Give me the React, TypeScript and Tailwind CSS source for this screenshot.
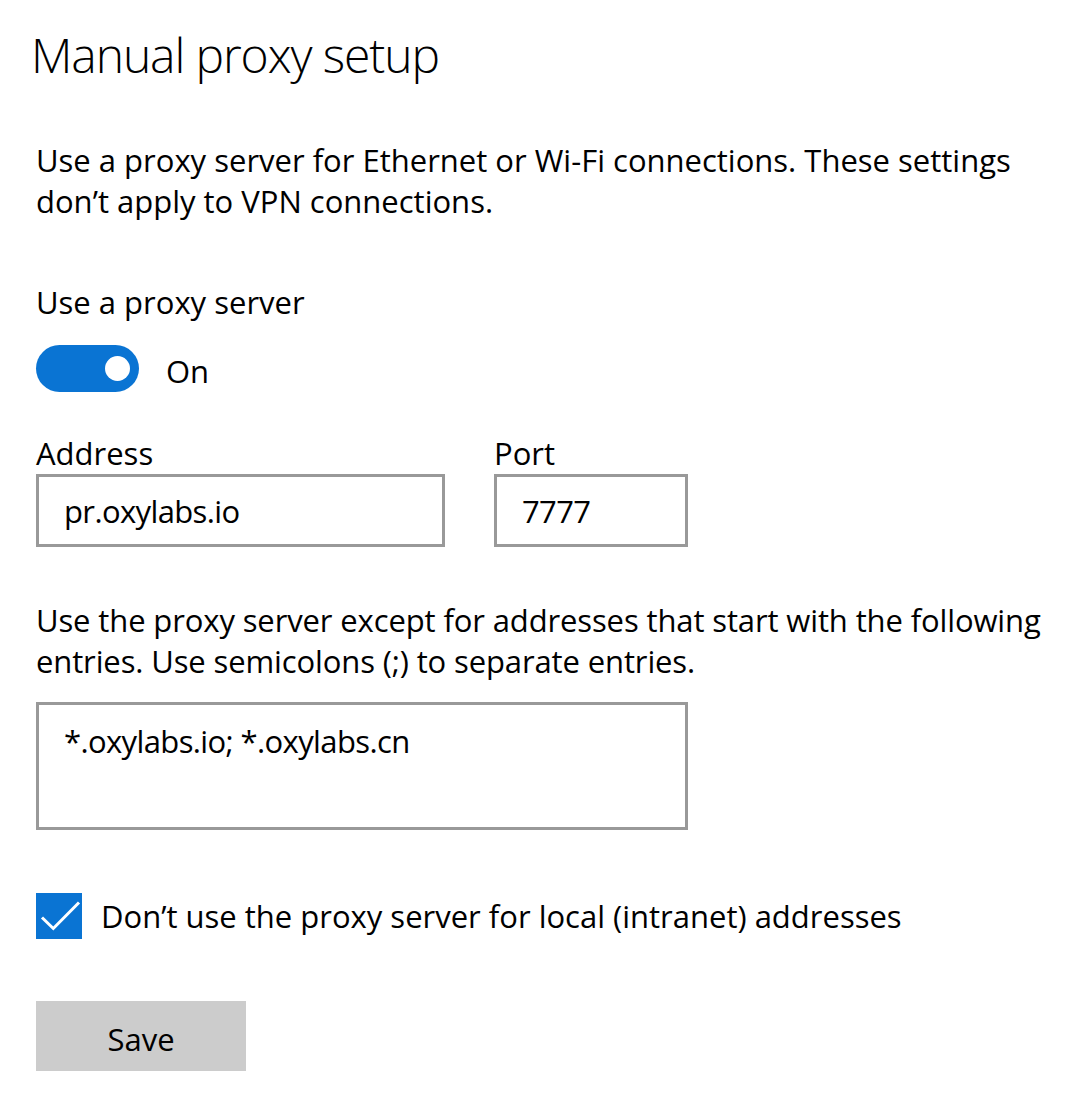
import { useState } from "react";

const font = { fontFamily: '"Open Sans", "Noto Sans", sans-serif' };

function Toggle({ on, onChange }: { on: boolean; onChange: () => void }) {
  return (
    <button
      onClick={onChange}
      className={`flex h-[47px] w-[103px] items-center rounded-full px-[9px] ${
        on ? "justify-end bg-[#0a74d3]" : "justify-start border-[3px] border-black bg-white"
      }`}
    >
      <span className={`h-[25px] w-[25px] rounded-full ${on ? "bg-white" : "bg-black"}`} />
    </button>
  );
}

function Checkbox({ checked, onChange }: { checked: boolean; onChange: () => void }) {
  return (
    <button
      onClick={onChange}
      className={`h-[46px] w-[46px] shrink-0 ${checked ? "bg-[#0a74d3]" : "border-[3px] border-black bg-white"}`}
    >
      {checked && (
        <svg viewBox="0 0 46 46" className="h-full w-full">
          <path d="M6 24.5 L17.3 35.5 L43 9.5" fill="none" stroke="white" strokeWidth="3" />
        </svg>
      )}
    </button>
  );
}

export default function App() {
  const [useProxy, setUseProxy] = useState(true);
  const [bypassLocal, setBypassLocal] = useState(true);
  const [address, setAddress] = useState("pr.oxylabs.io");
  const [port, setPort] = useState("7777");
  const [exceptions, setExceptions] = useState("*.oxylabs.io; *.oxylabs.cn");

  return (
    <div className="min-h-[1113px] w-[1080px] bg-white pl-[36px] pt-[25px] text-black" style={font}>
      <h1 className="-ml-[5px] h-[60px] text-[48px] font-light leading-[60px] tracking-[-0.023em]">
        Manual proxy setup
      </h1>

      <p className="mt-[55px] whitespace-nowrap text-[31px] leading-[41px]">
        Use a proxy server for Ethernet or Wi-Fi connections. These settings
        <br />
        don’t apply to VPN connections.
      </p>

      <div className="mt-[60px] text-[31px] leading-[41px]">Use a proxy server</div>

      <div className="mt-[22px] flex items-start">
        <Toggle on={useProxy} onChange={() => setUseProxy(!useProxy)} />
        <span className="ml-[27px] mt-[6px] text-[31px] leading-[41px]">{useProxy ? "On" : "Off"}</span>
      </div>

      <div className="mt-[41px] flex gap-[49px]">
        <div className="flex w-[409px] flex-col">
          <label className="text-[31px] leading-[41px]">Address</label>
          <input
            value={address}
            onChange={(e) => setAddress(e.target.value)}
            className="h-[73px] w-full border-[3px] border-[#999999] bg-white pl-[25px] text-[31px] tracking-[-0.02em] outline-none"
          />
        </div>
        <div className="flex w-[194px] flex-col">
          <label className="text-[31px] leading-[41px]">Port</label>
          <input
            value={port}
            onChange={(e) => setPort(e.target.value)}
            className="h-[73px] w-full border-[3px] border-[#999999] bg-white pl-[25px] text-[31px] tracking-[-0.02em] outline-none"
          />
        </div>
      </div>

      <p className="mt-[53px] whitespace-nowrap text-[31px] leading-[41px] tracking-[-0.004em]">
        Use the proxy server except for addresses that start with the following
        <br />
        entries. Use semicolons (;) to separate entries.
      </p>

      <textarea
        value={exceptions}
        onChange={(e) => setExceptions(e.target.value)}
        className="mt-[20px] block h-[128px] w-[652px] resize-none border-[3px] border-[#999999] bg-white pl-[25px] pt-[14px] text-[31px] leading-[44px] tracking-[-0.02em] outline-none"
      />

      <div className="mt-[63px] flex items-start">
        <Checkbox checked={bypassLocal} onChange={() => setBypassLocal(!bypassLocal)} />
        <span className="ml-[19px] mt-[3px] text-[31px] leading-[41px]">
          Don’t use the proxy server for local (intranet) addresses
        </span>
      </div>

      <button className="mt-[62px] flex h-[70px] w-[210px] items-center justify-center bg-[#cccccc] pt-[6px] text-[31px]">
        Save
      </button>
    </div>
  );
}
